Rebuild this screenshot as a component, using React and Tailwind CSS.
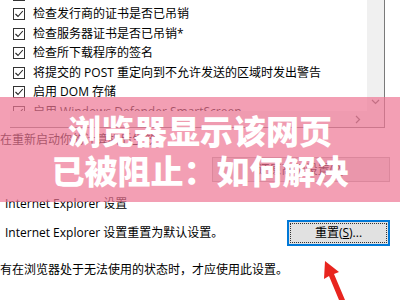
import React from "react";

const rows = [
  "使用 SSL 3.0",
  "检查发行商的证书是否已吊销",
  "检查服务器证书是否已吊销*",
  "检查所下载程序的签名",
  "将提交的 POST 重定向到不允许发送的区域时发出警告",
  "启用 DOM 存储",
  "启用 Windows Defender SmartScreen",
];

function Check() {
  return (
    <div className="w-[12px] h-[12px] border border-[#333] bg-white flex items-center justify-center shrink-0">
      <svg width="10" height="10" viewBox="0 0 10 10">
        <polyline points="1.5,5 4,7.5 8.8,2" fill="none" stroke="#222" strokeWidth="1.1" />
      </svg>
    </div>
  );
}

export default function App() {
  const font = { fontFamily: '"Open Sans", "Noto Sans CJK SC", sans-serif' };
  return (
    <div className="relative w-[400px] h-[300px] overflow-hidden bg-white text-[12px] text-black" style={font}>
      {/* list box */}
      <div className="ml-[10px] w-[375px] h-[128px] border-r border-b border-[#7a7a7a] flex flex-col">
        <div className="flex flex-1 overflow-hidden">
          <div className="flex-1 overflow-hidden">
            <div className="flex flex-col mt-[-15px] pl-[3px]">
              {rows.map((r, i) => (
                <div key={i} className="h-[19.5px] flex items-center gap-[8px] whitespace-nowrap">
                  <Check />
                  <span className="leading-none">{r}</span>
                </div>
              ))}
            </div>
          </div>
          <div className="w-[17px] bg-[#f0f0f0] flex flex-col justify-end items-center">
            <svg width="9" height="9" viewBox="0 0 9 9" className="mb-[5px]">
              <polyline points="1,3 4.5,6.5 8,3" fill="none" stroke="#606060" strokeWidth="1.2" />
            </svg>
          </div>
        </div>
        <div className="h-[16px] flex">
          <div className="flex-1 bg-[#f0f0f0] flex items-center justify-end pr-[5px]">
            <svg width="9" height="9" viewBox="0 0 9 9">
              <polyline points="3,1 6.5,4.5 3,8" fill="none" stroke="#606060" strokeWidth="1.2" />
            </svg>
          </div>
          <div className="w-[17px] bg-[#f0f0f0]" />
        </div>
      </div>

      <div className="mt-[4px] h-[16px] leading-[16px] whitespace-nowrap">在重新启动你的计算机后生效</div>
      <div className="flex justify-end mr-[10px] mt-[9px]">
        <div className="w-[178px] h-[25px] bg-[#e1e1e1] border border-[#adadad] flex items-center justify-center">
          还原高级设置(R)
        </div>
      </div>

      <div className="mt-[14px] pl-[5px] h-[16px] leading-[16px] whitespace-nowrap">Internet Explorer 设置</div>
      <div className="mt-[8px] flex items-center justify-between pr-[10px]">
        <span className="pl-[5px] whitespace-nowrap">Internet Explorer 设置重置为默认设置。</span>
        <div className="w-[103px] h-[26px] bg-[#e1e1e1] border-2 border-[#0078d7] flex items-center justify-center p-[1px]">
          <div className="w-full h-full border border-dotted border-[#333] flex items-center justify-center">
            <span>重置(<span className="underline">S</span>)...</span>
          </div>
        </div>
      </div>
      <div className="mt-[16px] h-[16px] leading-[16px] whitespace-nowrap">有在浏览器处于无法使用的状态时，才应使用此设置。</div>

      {/* red arrow annotation */}
      <svg className="absolute left-[315px] top-[258px]" width="45" height="42" viewBox="0 0 45 42">
        <polygon points="10,3 24,14 19,16 30,42 24,42 14,18 9,21" fill="#e8251f" />
      </svg>

      {/* pink title overlay */}
      <div className="absolute left-0 top-[97px] w-[400px] h-[105px] bg-[rgba(238,118,148,0.7)] flex flex-col items-center justify-center">
        <div
          className="text-white text-[33px] leading-[40px] font-black whitespace-nowrap"
          style={{ fontFamily: '"Noto Sans CJK SC", sans-serif' }}
        >
          浏览器显示该网页
        </div>
        <div
          className="text-white text-[33px] leading-[40px] font-black whitespace-nowrap"
          style={{ fontFamily: '"Noto Sans CJK SC", sans-serif' }}
        >
          已被阻止：如何解决
        </div>
      </div>
    </div>
  );
}
